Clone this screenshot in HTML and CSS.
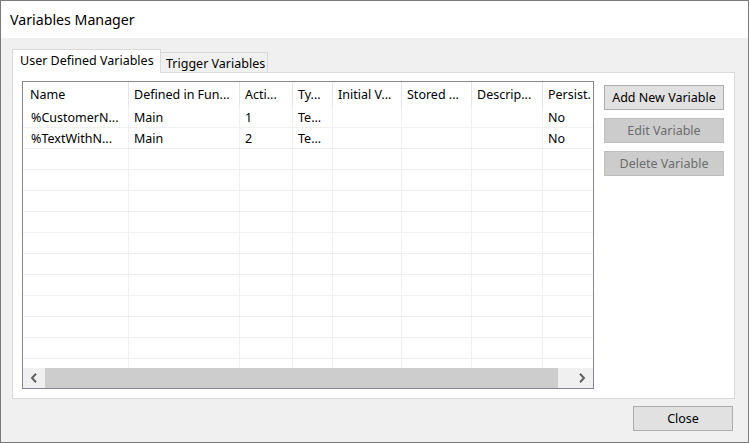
FILE: index.html
```html
<!DOCTYPE html>
<html>
<head>
<meta charset="utf-8">
<link rel="stylesheet" href="styles.css">
</head>
<body>
<div class="window">
  <div class="titlebar"><span class="title">Variables Manager</span></div>
  <div class="client">
    <div class="tabcontrol">
      <div class="tabstrip">
        <div class="tab active">User Defined Variables</div>
        <div class="tab">Trigger Variables</div>
        <div class="tabfill"></div>
      </div>
      <div class="tabpage">
        <div class="listview">
          <div class="lv-body">
            <div class="lv-row lv-header">
              <div class="c c1">Name</div>
              <div class="c c2">Defined in Fun...</div>
              <div class="c c3">Acti...</div>
              <div class="c c4">Ty...</div>
              <div class="c c5">Initial V...</div>
              <div class="c c6">Stored ...</div>
              <div class="c c7">Descrip...</div>
              <div class="c c8">Persist.</div>
            </div>
            <div class="lv-row">
              <div class="c c1">%CustomerN...</div>
              <div class="c c2">Main</div>
              <div class="c c3">1</div>
              <div class="c c4">Te...</div>
              <div class="c c5"></div>
              <div class="c c6"></div>
              <div class="c c7"></div>
              <div class="c c8">No</div>
            </div>
            <div class="lv-row">
              <div class="c c1">%TextWithN...</div>
              <div class="c c2">Main</div>
              <div class="c c3">2</div>
              <div class="c c4">Te...</div>
              <div class="c c5"></div>
              <div class="c c6"></div>
              <div class="c c7"></div>
              <div class="c c8">No</div>
            </div>
            <div class="lv-row"><div class="c c1"></div><div class="c c2"></div><div class="c c3"></div><div class="c c4"></div><div class="c c5"></div><div class="c c6"></div><div class="c c7"></div><div class="c c8"></div></div>
            <div class="lv-row"><div class="c c1"></div><div class="c c2"></div><div class="c c3"></div><div class="c c4"></div><div class="c c5"></div><div class="c c6"></div><div class="c c7"></div><div class="c c8"></div></div>
            <div class="lv-row"><div class="c c1"></div><div class="c c2"></div><div class="c c3"></div><div class="c c4"></div><div class="c c5"></div><div class="c c6"></div><div class="c c7"></div><div class="c c8"></div></div>
            <div class="lv-row"><div class="c c1"></div><div class="c c2"></div><div class="c c3"></div><div class="c c4"></div><div class="c c5"></div><div class="c c6"></div><div class="c c7"></div><div class="c c8"></div></div>
            <div class="lv-row"><div class="c c1"></div><div class="c c2"></div><div class="c c3"></div><div class="c c4"></div><div class="c c5"></div><div class="c c6"></div><div class="c c7"></div><div class="c c8"></div></div>
            <div class="lv-row"><div class="c c1"></div><div class="c c2"></div><div class="c c3"></div><div class="c c4"></div><div class="c c5"></div><div class="c c6"></div><div class="c c7"></div><div class="c c8"></div></div>
            <div class="lv-row"><div class="c c1"></div><div class="c c2"></div><div class="c c3"></div><div class="c c4"></div><div class="c c5"></div><div class="c c6"></div><div class="c c7"></div><div class="c c8"></div></div>
            <div class="lv-row"><div class="c c1"></div><div class="c c2"></div><div class="c c3"></div><div class="c c4"></div><div class="c c5"></div><div class="c c6"></div><div class="c c7"></div><div class="c c8"></div></div>
            <div class="lv-row"><div class="c c1"></div><div class="c c2"></div><div class="c c3"></div><div class="c c4"></div><div class="c c5"></div><div class="c c6"></div><div class="c c7"></div><div class="c c8"></div></div>
            <div class="lv-row"><div class="c c1"></div><div class="c c2"></div><div class="c c3"></div><div class="c c4"></div><div class="c c5"></div><div class="c c6"></div><div class="c c7"></div><div class="c c8"></div></div>
            <div class="lv-row"><div class="c c1"></div><div class="c c2"></div><div class="c c3"></div><div class="c c4"></div><div class="c c5"></div><div class="c c6"></div><div class="c c7"></div><div class="c c8"></div></div>
          </div>
          <div class="hscroll">
            <div class="sb-btn">
              <svg width="8" height="10" viewBox="0 0 8 10"><polyline points="6,0.8 2,5 6,9.2" fill="none" stroke="#606060" stroke-width="2"/></svg>
            </div>
            <div class="sb-track"><div class="sb-thumb"></div></div>
            <div class="sb-btn">
              <svg width="8" height="10" viewBox="0 0 8 10"><polyline points="2,0.8 6,5 2,9.2" fill="none" stroke="#606060" stroke-width="2"/></svg>
            </div>
          </div>
        </div>
        <div class="buttons">
          <div class="btn">Add New Variable</div>
          <div class="btn disabled">Edit Variable</div>
          <div class="btn disabled">Delete Variable</div>
        </div>
      </div>
    </div>
    <div class="footer">
      <div class="btn close">Close</div>
    </div>
  </div>
</div>
</body>
</html>
```

FILE: styles.css
```css
* { box-sizing: border-box; }
html, body { margin: 0; padding: 0; background: #ffffff; }
body {
  font-family: "Noto Sans", "Open Sans", sans-serif;
  font-size: 12.5px;
  color: #000;
}
.window {
  width: 749px;
  height: 443px;
  border: 1px solid #7a7a7a;
  display: flex;
  flex-direction: column;
  background: #f0f0f0;
}
.titlebar {
  height: 37px;
  background: #ffffff;
  display: flex;
  align-items: center;
  padding-left: 9px;
  flex: none;
}
.title {
  font-size: 14.2px;
  color: #000;
  padding-bottom: 1px;
}
.client {
  flex: 1;
  display: flex;
  flex-direction: column;
  padding: 11px 13px 0 11px;
}
.tabcontrol {
  display: flex;
  flex-direction: column;
}
.tabstrip {
  display: flex;
  align-items: flex-end;
  height: 24px;
}
.tab {
  height: 21px;
  padding: 0 0 0 5px;
  width: 107px;
  background: #f0f0f0;
  border: 1px solid #d9d9d9;
  border-left: none;
  line-height: 21px;
  white-space: nowrap;
}
.tab.active {
  height: 24px;
  width: 149px;
  padding-left: 7px;
  background: #ffffff;
  border-left: 1px solid #d9d9d9;
  border-bottom: none;
  line-height: 22px;
}
.tabfill {
  flex: 1;
  border-bottom: 1px solid #d9d9d9;
}
.tabpage {
  height: 326px;
  background: #ffffff;
  border: 1px solid #d9d9d9;
  border-top: none;
  display: flex;
  align-items: flex-start;
  padding: 8px 0 0 9px;
}
.listview {
  width: 572px;
  height: 308px;
  border: 1px solid #828790;
  display: flex;
  flex-direction: column;
  background: #ffffff;
  flex: none;
}
.lv-body {
  height: 286px;
  overflow: hidden;
}
.lv-row {
  display: flex;
  height: 21px;
  border-bottom: 1px solid #f0f0f0;
  width: 580px;
}
.lv-header {
  height: 25px;
  border-bottom: none;
}
.c {
  flex: none;
  border-right: 1px solid #f0f0f0;
  padding-left: 5px;
  padding-top: 1px;
  white-space: nowrap;
  overflow: hidden;
  line-height: 20px;
}
.lv-header .c {
  border-right-color: #e5e5e5;
  line-height: 25px;
  padding-top: 0;
  padding-left: 5px;
}
.c1 { width: 106px; padding-left: 8px !important; }
.lv-header .c1 { padding-left: 7px !important; }
.c2 { width: 111px; }
.c3 { width: 53px; }
.c4 { width: 40px; }
.c5 { width: 69px; }
.c6 { width: 70px; }
.c7 { width: 71px; }
.c8 { width: 60px; border-right: none; }
.hscroll {
  height: 20px;
  display: flex;
  background: #f0f0f0;
}
.sb-btn {
  width: 22px;
  flex: none;
  display: flex;
  align-items: center;
  justify-content: center;
}
.sb-track {
  flex: 1;
  padding: 0;
}
.sb-thumb {
  width: 513px;
  height: 20px;
  background: #cdcdcd;
}
.buttons {
  display: flex;
  flex-direction: column;
  gap: 8px;
  margin-left: 10px;
  margin-top: 4px;
}
.btn {
  width: 120px;
  height: 25px;
  background: #e1e1e1;
  border: 1px solid #adadad;
  text-align: center;
  line-height: 23px;
  white-space: nowrap;
}
.btn.disabled {
  background: #cccccc;
  border-color: #bfbfbf;
  color: #6d6d6d;
}
.footer {
  display: flex;
  justify-content: flex-end;
  padding-right: 2px;
  margin-top: 7px;
}
.btn.close {
  width: 100px;
}
```
